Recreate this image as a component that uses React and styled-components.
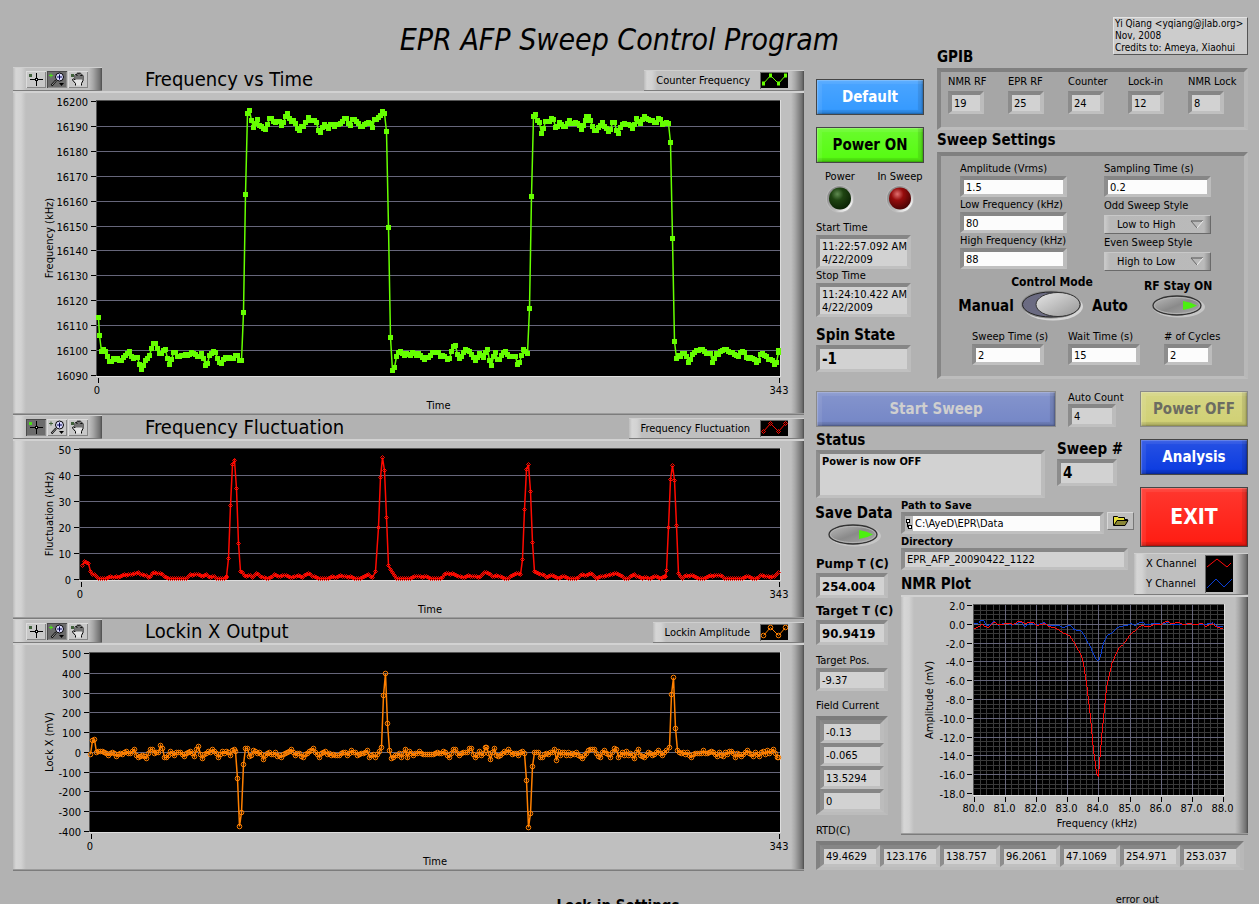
import React from "react";
import { useState } from "react";

import styled, { createGlobalStyle, css } from "styled-components";

/* traces are kept in thirds of a pixel: [first x, [y, y, ...]] with a step of 6 */
const counterTrace = [
  [298, [770]],
  [301, [826, 874, 866, 874, 889, 902, 904, 895, 898, 893, 901, 899, 890, 884, 878, 874, 887, 895, 892, 892, 913, 926, 916, 901, 893, 886, 865, 849, 848, 865, 880, 880, 871, 868]],
  [503, [895, 912, 898, 877, 875, 889, 889, 884, 886, 883, 884, 883, 877, 880, 881, 888, 889, 880, 895, 915, 910, 886, 878, 874, 877, 895, 907, 910, 898, 890, 893, 892, 893, 893, 885, 884, 901, 901, 757, 403, 160, 149, 181, 202, 188, 176, 196, 199, 205, 208, 193, 173, 173, 182, 187, 182, 184, 194, 185, 167, 160, 173, 182, 181, 190, 203, 211, 199, 199, 187]],
  [926, [172, 181, 179, 181, 187, 211, 217, 202, 193, 199, 205, 193, 193, 199, 191, 191, 189, 182, 173, 173, 190, 196, 178, 176, 184, 190, 197, 199, 193, 189, 187, 188, 202, 176, 176, 172, 164, 154, 160, 214, 502, 832, 931, 922, 889, 875, 872, 878, 886, 878, 881, 884, 876, 879, 884, 880]],
  [1262, [884, 890, 898, 892, 890, 885, 877, 876, 876, 876, 889, 886, 888]],
  [1343, [898, 893, 874, 859, 856, 883, 895, 889, 877, 868, 871, 874, 883, 892, 901, 892, 880, 886, 892, 877, 868, 901, 916, 889, 877, 898, 898, 886, 877, 874, 883, 889, 889, 889, 889, 913, 907, 886, 868, 874, 880, 745, 409, 169, 163, 181, 187, 220, 205, 184, 184, 182, 175, 178, 202, 199, 187, 191, 197, 199, 188, 181, 188, 188, 187, 190, 195, 206, 196, 181]],
  [1760, [169, 169, 181, 197, 211, 209, 202, 196, 187, 199, 205, 214, 208, 185, 185, 211, 220, 202, 193, 190, 193, 191, 196, 205, 193, 175, 182, 188, 178, 169, 173, 178, 181, 180, 187, 187, 173, 178, 193, 190, 187, 190, 247, 535, 844, 895, 886, 887, 880, 880, 889, 905, 898, 883, 877, 871, 870, 868, 868, 874, 878, 880, 880, 905, 895, 880, 883, 874, 870, 868, 868, 874, 877, 877, 881, 884, 889, 875, 874, 876, 892, 895, 892, 895, 898, 905, 901, 883, 878, 886, 889, 898, 898, 899, 913, 905, 877]],
  [2338, [871]],
];

const fluctuationTrace = [
  [248, [466, 454, 457, 460, 484, 491, 491, 498, 503, 504, 503, 504, 504, 501, 499, 500, 500, 499, 500, 498, 496, 493, 494, 493, 492, 492, 490, 488, 487, 492, 493, 494, 495, 502, 498, 488, 487, 490, 490, 490, 491, 499, 502, 503, 505, 505, 504, 505, 505, 505, 504, 505, 503, 498, 493, 495, 493, 493, 491, 495, 499, 494, 491, 497, 500, 498, 499, 503, 505, 504, 504, 503, 501]],
  [682, [498, 445, 286, 163, 151, 235, 400, 484, 487, 494, 497, 496, 496, 501, 494, 490, 491, 498, 502, 502, 503, 504, 502, 497, 492, 495, 499, 498, 495, 494, 495, 498, 501, 502, 499, 498, 496, 499, 502, 496, 491, 489, 492, 497, 499, 501, 503, 503, 504, 505, 504, 504, 502, 499, 501, 500, 498, 496, 498, 499, 499, 500, 498, 502, 504, 504, 503, 503, 500, 497, 495, 493, 499, 500]],
  [1127, [484]],
  [1136, [352, 202, 142, 181, 322, 466, 478, 487, 496, 503, 504, 503, 505, 504, 505, 504, 505, 502, 498, 499, 499, 498, 500, 499, 498, 500, 503, 504, 504, 503, 504, 503, 501, 493, 488, 490, 492, 490, 491, 495, 497, 499, 502, 500, 498, 496, 498, 499, 499, 499, 500, 499, 491, 487, 487, 488, 492, 498, 497, 495, 497, 499, 501, 503, 504, 503, 497, 496, 493, 490, 489]],
  [1562, [493, 448, 298, 178, 163, 244, 397, 484, 485, 488, 491, 491, 494, 501, 497, 496, 496, 498, 501, 503, 501, 499, 498, 500, 503, 504, 504, 504, 503, 501, 495, 491, 495, 496, 492, 490, 492, 498, 503, 500, 499, 498, 499, 495, 495, 493, 491, 490, 490, 492, 494, 498, 503, 504, 503, 499, 494, 493, 497, 499, 502, 504, 502, 500, 503, 504, 502, 499, 499, 500, 503, 501, 499]],
  [1997, [498]],
  [2002, [481, 352, 208, 166, 211, 346, 488, 499, 503, 497, 496, 497, 495, 494, 497, 502, 504, 504, 503, 504, 502, 499, 496, 497, 496, 496, 495, 494, 499, 503, 504, 504, 505, 504, 504, 505, 504, 504, 503, 500, 499, 499, 500, 503, 504, 503, 500, 496, 495, 497, 498, 499, 500, 498, 497, 493, 487]],
];

const lockinTrace = [
  [272, [401, 360, 356, 395, 394, 392, 392, 396, 399, 404, 400, 395, 400, 408, 402, 399, 401, 396, 394, 398, 399, 393, 387, 405, 411, 407, 406, 408, 414, 400, 387, 386, 398, 396, 397, 375, 383, 410, 411, 404, 394, 400, 404, 397, 396, 395, 401, 408, 400, 395, 393, 399, 408, 388, 378, 403, 414, 403, 398, 394, 396, 388, 393, 400, 410, 403, 394, 398, 394, 396, 404, 391, 387]],
  [708, [393, 473, 618, 576, 432, 384, 385, 408, 405, 390, 392, 400, 396, 401, 418, 405, 398, 397, 401, 403, 397, 408, 405, 411, 402, 398, 396, 394, 388, 396, 404, 399, 398, 408, 411, 402, 400, 394, 391, 385, 397, 402, 411, 400, 396, 392, 402, 400, 404, 402, 405, 404, 404, 400, 396, 397, 405, 399, 391, 396, 395, 404, 401, 400, 398, 396, 391, 411, 404, 402, 411, 402, 394, 380, 225, 158, 308, 390, 414, 410, 405, 406, 398, 411, 400, 388, 411, 393, 398, 404, 398, 400, 393, 400, 402, 402, 402, 402, 402, 402, 398, 396, 400, 398, 393, 396, 405, 412, 400, 388, 386, 399, 404, 398, 396, 397, 396, 384, 385, 403, 412, 404, 394, 405, 399, 381]],
  [1462, [380, 400, 418, 396, 384, 404, 407, 405, 398, 394, 396, 387, 396, 402, 400, 400, 405, 396, 393]],
  [1575, [398, 480, 621, 579, 437, 396, 396, 396, 410, 411, 403, 400, 402, 396, 397, 388, 420, 392, 404, 396, 395, 404, 396, 404, 399, 401, 396, 404, 408, 413, 405, 400, 390, 388, 387, 388, 400, 407, 410, 396, 391, 398, 402, 410, 396, 384, 387, 410, 403, 396, 404, 393, 406, 398, 404, 414, 397, 387, 404, 408, 411, 405, 396, 399, 404, 402, 395, 391, 398, 404, 396, 391]],
  [2009, [381, 223, 171, 324, 389, 396, 400, 395, 402, 396, 404, 411, 402, 399, 398, 398, 400, 390, 400, 399, 396, 394, 397, 402, 408, 397, 404, 408, 396, 402, 394, 392, 398, 411, 398, 402, 408, 401, 396, 390, 398, 402, 407, 395, 402, 408, 396, 394, 402, 390, 398, 392, 388, 400, 410]],
  [2337, [411]],
];

const xChannel = "253,265 262,263 277,253 283,259 295,262 303,255 313,246 325,255 337,254 346,251 358,251 371,253 383,245 395,245 405,251 415,248 428,247 440,256 455,254 463,250 475,258 486,262 498,265 510,273 522,280 538,286 550,303 562,325 574,346 580,370 589,425 598,500 604,560 610,625 616,672 620,700 625,711 629,665 635,590 642,520 650,440 658,405 666,370 676,347 686,325 700,313 712,297 722,281 738,270 748,261 758,255 765,261 780,259 795,253 813,253 825,246 834,243 843,251 855,249 863,246 875,252 888,254 898,249 915,255 935,250 948,260 957,255 968,251 980,261 1000,267";
const yChannel = "253,250 265,250 273,241 282,242 290,258 303,252 313,243 323,256 337,252 350,249 365,256 380,250 393,246 405,260 418,251 430,252 440,256 455,250 463,247 473,256 510,257 518,264 535,256 543,258 552,269 572,272 580,282 592,304 602,322 610,342 620,360 626,362 632,345 640,312 650,288 668,277 680,265 690,259 710,257 722,250 735,257 750,246 760,247 768,254 800,250 813,253 835,247 848,254 880,253 900,250 920,254 935,252 948,253 970,248 980,258 1000,261";

const range = (from, to, step) => {
  const out = [];
  const n = Math.round((to - from) / step);
  for (let i = 0; i <= n; i++) out.push(from + i * step);
  return out;
};

const tracePoints = (trace, dy) =>
  trace.flatMap(([x, ys]) =>
    ys.map((y, i) => [Math.round((x + i * 6) / 3) - 13.5, Math.round(y / 3) + dy + 0.5])
  );

const Marker = ({ kind, x, y }) => {
  if (kind === "square") {
    return <rect x={x - 2.5} y={y - 2.5} width="5" height="5" fill="#66ff00" />;
  }
  if (kind === "diamond") {
    return (
      <path d={`M${x - 2} ${y}l2 -2l2 2l-2 2z`} fill="none" stroke="#ff0a00" />
    );
  }
  return <circle cx={x} cy={y} r="2.3" fill="none" stroke="#ff8000" />;
};

const colors = { square: "#66ff00", diamond: "#ff0a00", circle: "#ff8000" };

function StripChart({ height, left, bottom, ticks, kind, trace, dy, axis }) {
  const points = tracePoints(trace, dy);
  const tickY = (i) =>
    Math.round(10 + (i * (bottom - 11)) / (ticks.length - 1)) + 0.5;
  const right = 767;
  return (
    <ChartSvg viewBox={`0 0 791 ${height}`} role="img" aria-label={axis}>
      <rect x={left - 1} y="9" width={right - left + 2} height={bottom - 8} fill="#dedede" />
      <rect x={left - 1} y="9" width={right - left + 1} height={bottom - 9} fill="#555" />
      <rect x={left} y="10" width={right - left} height={bottom - 10} fill="#000" />
      {ticks.map((t, i) => (
        <g key={t}>
          <text x={left - 9} y={tickY(i) + 4} textAnchor="end">
            {t}
          </text>
          <path d={`M${left - 6} ${tickY(i)}h5`} stroke="#000" />
          {i > 0 && i < ticks.length - 1 && (
            <path d={`M${left} ${tickY(i)}H${right}`} stroke="#66667a" />
          )}
        </g>
      ))}
      <polyline points={points.join(" ")} fill="none" stroke={colors[kind]} strokeWidth="1.5" />
      {points.map(([x, y], i) => (
        <Marker key={i} kind={kind} x={x} y={y} />
      ))}
      <path d={`M${left + 1.5} ${bottom + 2}v5M${right - 0.5} ${bottom + 2}v5`} stroke="#000" />
      <text x={left} y={bottom + 18} textAnchor="middle">
        0
      </text>
      <text x={right - 1} y={bottom + 18} textAnchor="middle">
        343
      </text>
      <text x={(left + right) / 2} y={bottom + 33} textAnchor="middle">
        Time
      </text>
      <text
        transform={`translate(40 ${(bottom + 9) / 2}) rotate(-90)`}
        textAnchor="middle"
      >
        {axis}
      </text>
    </ChartSvg>
  );
}

function NmrChart() {
  const gx = (v) => Math.round(73 + (v - 80) * 31.1) + 0.5;
  const gy = (v) => Math.round(10 + (2 - v) * 9.4) + 0.5;
  return (
    <ChartSvg viewBox="0 0 347 240" role="img" aria-label="NMR Plot">
      <rect x="72" y="9" width="252" height="192" fill="#dedede" />
      <rect x="72" y="9" width="251" height="191" fill="#555" />
      <rect x="73" y="10" width="250" height="190" fill="#000" />
      {range(80.2, 87.8, 0.2).map((v) => (
        <path key={v} d={`M${gx(v)} 10V200`} stroke="#3a3a3a" />
      ))}
      {range(-17.5, 1.5, 0.5).map((v) => (
        <path key={v} d={`M73 ${gy(v)}H323`} stroke="#3a3a3a" />
      ))}
      {range(80, 88, 1).map((v) => (
        <g key={v}>
          {v > 80 && v < 88 && <path d={`M${gx(v)} 10V200`} stroke="#66667a" />}
          <path d={`M${gx(v)} 202v5`} stroke="#000" />
          <text x={gx(v) - 1} y="217" textAnchor="middle">
            {v.toFixed(1)}
          </text>
        </g>
      ))}
      {range(-18, 2, 2).map((v) => (
        <g key={v}>
          {v > -18 && v < 2 && <path d={`M73 ${gy(v)}H323`} stroke="#66667a" />}
          <path d={`M66 ${gy(v)}h5`} stroke="#000" />
          <text x="64" y={gy(v) + 4} textAnchor="end">
            {v.toFixed(1)}
          </text>
        </g>
      ))}
      <g transform="translate(-11 -55) scale(0.33333)" fill="none" strokeWidth="3" shapeRendering="crispEdges">
        <polyline points={yChannel} stroke="#0a3fd6" />
        <polyline points={xChannel} stroke="#ff0a0a" />
      </g>
      <text x="196" y="232" textAnchor="middle">
        Frequency (kHz)
      </text>
      <text transform="translate(32 105) rotate(-90)" textAnchor="middle">
        Amplitude (mV)
      </text>
    </ChartSvg>
  );
}

function Tools({ active }) {
  const dot = (i) => (active === i ? "#4be01a" : "#3f5f3a");
  return (
    <Palette>
      <ToolButton $on={active === 0} aria-label="Cursor">
        <svg width="20" height="17">
          <rect x="3" y="3" width="3" height="3" fill={dot(0)} />
          <path d="M10.500 2v5M10.500 10v5M4 8.500h5M12 8.500h5" stroke="#000" />
          <rect x="9.500" y="7.500" width="2" height="2" fill="#eee" stroke="#000" />
        </svg>
      </ToolButton>
      <ToolButton $on={active === 1} aria-label="Zoom">
        <svg width="20" height="17">
          <path d="M2 4.500h4M4 2.500v4" stroke={dot(1)} />
          <path d="M9 9.500l-4.500 5" stroke="#000" strokeWidth="2" />
          <path d="M8.800 9.700l-3.800 4.300" stroke="#ddd" strokeWidth="0.700" />
          <circle cx="12.500" cy="6" r="4" fill="#dcdcff" stroke="#000" />
          <path d="M10 6h5M12.500 3.500v5" stroke="#00004a" />
          <path d="M12 12h5l-2.500 3z" />
        </svg>
      </ToolButton>
      <ToolButton $on={active === 2} aria-label="Pan">
        <svg width="20" height="17">
          <rect x="3" y="3" width="3" height="3" fill={dot(2)} />
          <path
            d="M7.500 14.500v-2l-3-3.500c0-1.500 1.500-1.500 2.500 0V4.500c0-1.500 2-1.500 2 0V3c0-1.500 2-1.500 2 0c0-1.500 2-1.500 2 .5v1.500c0-1.500 2-1.500 2 0V9.500l-1.500 3v2"
            fill="#e4e4e4"
            stroke="#000"
          />
          <path d="M9 4V8.500M11 3V8.500M13 4V8.500" stroke="#000" />
        </svg>
      </ToolButton>
    </Palette>
  );
}

const LegendIcon = ({ kind }) => (
  <svg width="28" height="17">
    <path d="M0 17V0H28" fill="none" stroke="#666" strokeWidth="2" />
    <rect x="1" y="1" width="27" height="15" fill="#000" />
    <path d="M3.500 11.500L10.500 3.500L18.500 11.500L25.500 3.500" fill="none" stroke={colors[kind]} />
    {[[3.5, 11.5], [10.5, 3.5], [18.5, 11.5], [25.5, 3.5]].map(([x, y]) => (
      <g key={x}>
        {kind === "square" ? (
          <rect x={x - 1.5} y={y - 2} width="3" height="4" fill={colors[kind]} />
        ) : (
          <Marker kind={kind} x={x} y={y} />
        )}
      </g>
    ))}
  </svg>
);

function Plot({ title, legend, active, ...chart }) {
  return (
    <PlotBlock>
      <PlotHead>
        <Tools active={active} />
        <PlotTitle>{title}</PlotTitle>
        <Legend>
          {legend}
          <LegendIcon kind={chart.kind} />
        </Legend>
      </PlotHead>
      <Frame>
        <StripChart {...chart} />
      </Frame>
    </PlotBlock>
  );
}

function Lamp({ label, hue }) {
  const [light, base, dark] = hue;
  return (
    <LampItem>
      {label}
      <svg width="30" height="30">
        <defs>
          <radialGradient id={`lamp-${label.length}`} cx="38%" cy="30%" r="70%">
            <stop offset="0" stopColor={light} />
            <stop offset="0.4" stopColor={base} />
            <stop offset="1" stopColor={dark} />
          </radialGradient>
          <linearGradient id={`ring-${label.length}`} x1="0" y1="0" x2="1" y2="1">
            <stop offset="0.2" stopColor="#8e8e8e" />
            <stop offset="0.6" stopColor="#b8b8b8" />
            <stop offset="0.85" stopColor="#f6f6f6" />
          </linearGradient>
        </defs>
        <circle cx="15" cy="15" r="14" fill="#bcbcbc" />
        <circle cx="15" cy="15" r="13" fill={`url(#ring-${label.length})`} />
        <circle cx="15" cy="14.500" r="11" fill={`url(#lamp-${label.length})`} />
      </svg>
    </LampItem>
  );
}

function LedToggle({ label }) {
  const [on, setOn] = useState(true);
  return (
    <BareButton aria-label={label} aria-pressed={on} onClick={() => setOn(!on)}>
      <svg width="54" height="24">
        <defs>
          <linearGradient id="pill" x1="0" y1="0" x2="1" y2="1">
            <stop offset="0.200" stopColor="#a8a8a8" />
            <stop offset="0.500" stopColor="#8a8a8a" />
            <stop offset="0.900" stopColor="#a4a4a4" />
          </linearGradient>
        </defs>
        <ellipse cx="28" cy="13" rx="26" ry="10.500" fill="#c6c6c6" />
        <ellipse cx="26" cy="11.500" rx="24" ry="9.500" fill="url(#pill)" stroke="#333" strokeWidth="1.300" />
        <ellipse cx="26" cy="11.500" rx="22.500" ry="8" fill="none" stroke="#b4b4b4" />
        <path d="M32 7q8 1 14 4.500q-6 3.500-14 4.500z" fill={on ? "#4cf010" : "#5a7a50"} />
      </svg>
    </BareButton>
  );
}

function ModeSwitch() {
  const [auto, setAuto] = useState(true);
  return (
    <BareButton aria-label="Control Mode" aria-pressed={auto} onClick={() => setAuto(!auto)}>
      <svg width="62" height="31">
        <defs>
          <linearGradient id="knob" x1="0" y1="0" x2="1" y2="1">
            <stop offset="0.150" stopColor="#dadada" />
            <stop offset="0.850" stopColor="#a2a2a2" />
          </linearGradient>
        </defs>
        <ellipse cx="32" cy="16.500" rx="30" ry="14" fill="#d6d6d6" />
        <ellipse cx="30" cy="14.500" rx="30" ry="14" fill="#8e8e8e" />
        <ellipse cx="30" cy="14.500" rx="28.500" ry="12.500" fill="#6b6b82" stroke="#222" />
        <ellipse cx={auto ? 37 : 23} cy="14.500" rx="22" ry="12" fill="url(#knob)" stroke="#333" />
      </svg>
    </BareButton>
  );
}

const TextField = ({ id, label, value, width }) => (
  <Field>
    <Label htmlFor={id}>{label}</Label>
    <Input id={id} defaultValue={value} $width={width} />
  </Field>
);

const SelectField = ({ id, label, value }) => (
  <Field $gap={2}>
    <Label htmlFor={id}>{label}</Label>
    <SelectWrap>
      <Select id={id} defaultValue={value}>
        <option>Low to High</option>
        <option>High to Low</option>
      </Select>
      <svg width="14" height="9">
        <path d="M1 1h12" stroke="#555" />
        <path d="M1 1l6 7" stroke="#666" />
        <path d="M13 1l-6 7" stroke="#eee" />
      </svg>
    </SelectWrap>
  </Field>
);

const gpib = [
  ["NMR RF", 19],
  ["EPR RF", 25],
  ["Counter", 24],
  ["Lock-in", 12],
  ["NMR Lock", 8],
];
const fieldCurrent = ["-0.13", "-0.065", "13.5294", "0"];
const rtd = ["49.4629", "123.176", "138.757", "96.2061", "47.1069", "254.971", "253.037"];

export default function App() {
  return (
    <Page>
      <GlobalStyle />
      <Title>EPR AFP Sweep Control Program</Title>

      <Plots>
        <Plot
          title="Frequency vs Time"
          legend="Counter Frequency"
          active={1}
          height={324}
          left={84}
          bottom={285}
          ticks={range(0, 11, 1).map((i) => 16200 - i * 10)}
          kind="square"
          trace={counterTrace}
          dy={-31}
          axis="Frequency (kHz)"
        />
        <Plot
          title="Frequency Fluctuation"
          legend="Frequency Fluctuation"
          active={0}
          height={180}
          left={67}
          bottom={141}
          ticks={[50, 40, 30, 20, 10, 0]}
          kind="diamond"
          trace={fluctuationTrace}
          dy={-29}
          axis="Fluctuation (kHz)"
        />
        <Plot
          title="Lockin X Output"
          legend="Lockin Amplitude"
          active={1}
          height={228}
          left={77}
          bottom={189}
          ticks={[500, 400, 300, 200, 100, 0, -100, -200, -300, -400]}
          kind="circle"
          trace={lockinTrace}
          dy={-23}
          axis="Lock X (mV)"
        />
      </Plots>

      <Quick>
        <BevelButton $color="#3399ff">Default</BevelButton>
        <BevelButton $color="#55fb10" $ink="#000">
          Power ON
        </BevelButton>
        <Lamps>
          <Lamp label="Power" hue={["#5f8a50", "#1f4412", "#0c2405"]} />
          <Lamp label="In Sweep" hue={["#e07070", "#960c0c", "#4c0404"]} />
        </Lamps>
        <Field>
          <Label htmlFor="start">Start Time</Label>
          <Sunken as="output" id="start" $width={95} $height={34} $top>
            11:22:57.092 AM
            <br />
            4/22/2009
          </Sunken>
        </Field>
        <Field>
          <Label htmlFor="stop">Stop Time</Label>
          <Sunken as="output" id="stop" $width={95} $height={34} $top>
            11:24:10.422 AM
            <br />
            4/22/2009
          </Sunken>
        </Field>
        <SpinState>
          <Heading as="label" htmlFor="spin">
            Spin State
          </Heading>
          <Sunken as="output" id="spin" $width={95} $height={27} $size={15} $bold>
            -1
          </Sunken>
        </SpinState>
      </Quick>

      <Aside>
        <AsideHead>
          <Heading>GPIB</Heading>
          <Note>
            Yi Qiang &lt;yqiang@jlab.org&gt;
            <br />
            Nov, 2008
            <br />
            Credits to: Ameya, Xiaohui
          </Note>
        </AsideHead>
        <GpibPanel>
          {gpib.map(([label, value]) => (
            <Field key={label} $gap={2}>
              <Label htmlFor={label}>{label}</Label>
              <Sunken as="output" id={label} $width={36} $height={23}>
                {value}
              </Sunken>
            </Field>
          ))}
        </GpibPanel>
        <Heading>Sweep Settings</Heading>
        <SettingsPanel>
          <SettingsColumns>
            <Stack $gap={1}>
              <TextField id="amplitude" label="Amplitude (Vrms)" value="1.5" />
              <TextField id="low" label="Low Frequency (kHz)" value="80" />
              <TextField id="high" label="High Frequency (kHz)" value="88" />
            </Stack>
            <Stack $gap={2}>
              <TextField id="sampling" label="Sampling Time (s)" value="0.2" />
              <SelectField id="odd" label="Odd Sweep Style" value="Low to High" />
              <SelectField id="even" label="Even Sweep Style" value="High to Low" />
            </Stack>
          </SettingsColumns>
          <Modes>
            <ModeGrid>
              <ModeLabel $wide>Control Mode</ModeLabel>
              <Heading as="span">Manual</Heading>
              <ModeSwitch />
              <Heading as="span">Auto</Heading>
            </ModeGrid>
            <RfStay>
              <ModeLabel>RF Stay ON</ModeLabel>
              <LedToggle label="RF Stay ON" />
            </RfStay>
          </Modes>
          <Timing>
            <TextField id="sweepTime" label="Sweep Time (s)" value="2" width={72} />
            <TextField id="waitTime" label="Wait Time (s)" value="15" width={72} />
            <TextField id="cycles" label="# of Cycles" value="2" width={48} />
          </Timing>
        </SettingsPanel>
      </Aside>

      <Lower>
        <Console>
          <Row $gap={12}>
            <BevelButton $color="#7486c6" $ink="#cfcfcf" $wide disabled>
              Start Sweep
            </BevelButton>
            <AutoCount>
              <Label htmlFor="autoCount">Auto Count</Label>
              <Sunken as="output" id="autoCount" $width={48} $height={23}>
                4
              </Sunken>
            </AutoCount>
          </Row>
          <Row $gap={12}>
            <Status>
              <Heading as="label" htmlFor="status">
                Status
              </Heading>
              <Sunken as="output" id="status" $height={48} $top $bold>
                Power is now OFF
              </Sunken>
            </Status>
            <Field>
              <Heading as="label" htmlFor="sweepNo">
                Sweep #
              </Heading>
              <Sunken as="output" id="sweepNo" $width={60} $height={27} $size={15} $bold>
                4
              </Sunken>
            </Field>
          </Row>
        </Console>

        <Side>
          <BevelButton $color="#d0d074" $ink="#6c6c62" disabled>
            Power OFF
          </BevelButton>
          <BevelButton $color="#0a3ae0">Analysis</BevelButton>
          <BevelButton $color="#ff1c12" $tall>
            EXIT
          </BevelButton>
          <NmrLegend>
            <LegendNames>
              <span>X Channel</span>
              <span>Y Channel</span>
            </LegendNames>
            <svg width="28" height="38">
              <path d="M0 38V0H28" fill="none" stroke="#666" strokeWidth="2" />
              <rect x="1" y="1" width="27" height="36" fill="#000" />
              <path d="M2 12l10-8l10 8l4-4" fill="none" stroke="#ff0a0a" />
              <path d="M2 33l9-9l8 8l8-8" fill="none" stroke="#0a3fd6" />
            </svg>
          </NmrLegend>
        </Side>

        <Temps>
          <SaveData>
            <Heading>Save Data</Heading>
            <LedToggle label="Save Data" />
          </SaveData>
          <Field $gap={1}>
            <Label htmlFor="pump" $strong>
              Pump T (C)
            </Label>
            <Sunken as="output" id="pump" $width={72} $height={25} $size={13} $bold>
              254.004
            </Sunken>
          </Field>
          <TargetTemp>
            <Label htmlFor="target" $strong>
              Target T (C)
            </Label>
            <Sunken as="output" id="target" $width={72} $height={25} $size={13} $bold>
              90.9419
            </Sunken>
          </TargetTemp>
          <Field>
            <Label htmlFor="pos">Target Pos.</Label>
            <Sunken as="output" id="pos" $width={72} $height={23}>
              -9.37
            </Sunken>
          </Field>
          <FieldCurrent>
            <Label as="span">Field Current</Label>
            <ArrayBox $column>
              {fieldCurrent.map((v) => (
                <Sunken key={v} $height={23}>
                  {v}
                </Sunken>
              ))}
            </ArrayBox>
          </FieldCurrent>
          <Label as="span">RTD(C)</Label>
        </Temps>

        <Paths>
          <PathLabel htmlFor="path">Path to Save</PathLabel>
          <PathRow>
            <PathBox>
              <svg width="8" height="14">
                <rect x="1.500" y="2.500" width="3" height="3" fill="#fff" stroke="#000" />
                <rect x="3.500" y="8.500" width="3" height="3" fill="#fff" stroke="#000" />
                <path d="M2.500 6v4h1" fill="none" stroke="#000" />
              </svg>
              <PathInput id="path" defaultValue="C:\AyeD\EPR\Data" />
            </PathBox>
            <FolderButton aria-label="Browse">
              <svg width="17" height="12">
                <path d="M1.500 10.500v-9h4l1 1h6v2h3l-3 6z" fill="#e8df3a" stroke="#000" />
                <path d="M2 10.500l3-5h11l-3 5z" fill="#8a8636" stroke="#000" />
              </svg>
            </FolderButton>
          </PathRow>
          <PathLabel htmlFor="directory">Directory</PathLabel>
          <Sunken as="output" id="directory" $height={22}>
            EPR_AFP_20090422_1122
          </Sunken>
          <NmrHeading>NMR Plot</NmrHeading>
        </Paths>

        <Nmr>
          <Frame>
            <NmrChart />
          </Frame>
        </Nmr>

        <Rtd>
          <ArrayBox>
            {rtd.map((v) => (
              <Sunken key={v} $height={22}>
                {v}
              </Sunken>
            ))}
          </ArrayBox>
        </Rtd>
      </Lower>

      <Footer>
        <Heading>Lock-in Settings</Heading>
        <span>error out</span>
      </Footer>
    </Page>
  );
}

const GlobalStyle = createGlobalStyle`
  * {
    box-sizing: border-box;
  }
  body {
    margin: 0;
    background: #b2b2b2;
    color: #000;
    font: 11px/14px "DejaVu Sans Condensed", "DejaVu Sans", sans-serif;
  }
  svg {
    display: block;
  }
`;

const Page = styled.main`
  display: grid;
  grid-template-columns: minmax(0, 1fr) 109px 311px;
  grid-template-rows: 50px auto auto 1fr;
  grid-template-areas:
    "title title aside"
    "plots quick aside"
    "plots lower lower"
    "footer footer footer";
  column-gap: 12px;
  height: 100vh;
  min-width: 1100px;
  padding: 17px 11px 0 13px;
  overflow: hidden;
`;

const Title = styled.h1`
  grid-area: title;
  margin: 0;
  padding-right: 86px;
  text-align: right;
  font-size: 30px;
  font-style: italic;
  font-weight: 400;
  line-height: 46px;
`;

const Plots = styled.section`
  grid-area: plots;
`;

const PlotBlock = styled.article`
  display: flex;
  flex-direction: column;
`;

const PlotHead = styled.header`
  display: flex;
  align-items: flex-end;
  height: 24px;
`;

const PlotTitle = styled.h2`
  margin: 0 auto 0 43px;
  font-size: 20px;
  font-weight: 400;
  line-height: 24px;
`;

const raised = css`
  background: linear-gradient(
    90deg,
    #bcbcbc 0,
    #d6d6d6 3px,
    #d2d2d2 8px,
    #bfbfbf 13px,
    #bfbfbf calc(100% - 13px),
    #a8a8a8 calc(100% - 9px),
    #707070 calc(100% - 2px),
    #4c4c4c 100%
  );
`;

const Palette = styled.div`
  ${raised}
  display: flex;
  align-items: center;
  gap: 1px;
  width: 89px;
  height: 24px;
  padding-left: 13px;
  border-top: 1px solid #cfcfcf;
  border-bottom: 1px solid #7c7c7c;
`;

const ToolButton = styled.button`
  width: 20px;
  height: 17px;
  padding: 0;
  border: 0;
  background: ${({ $on }) => ($on ? "#6c6c6c" : "#c8c8c8")};
  box-shadow: inset 1px 1px ${({ $on }) => ($on ? "#4a4a4a" : "#dcdcdc")},
    inset -1px -1px ${({ $on }) => ($on ? "#8c8c8c" : "#868686")};
`;

const Legend = styled.div`
  ${raised}
  display: flex;
  align-items: center;
  gap: 10px;
  height: 21px;
  padding: 0 16px 0 12px;
  border-top: 1px solid #cfcfcf;
  border-bottom: 1px solid #7c7c7c;
`;

const Frame = styled.div`
  ${raised}
  box-shadow: inset 0 2px #d2d2d2, inset 0 -1px #7c7c7c, inset 0 -2px #9c9c9c;
`;

const ChartSvg = styled.svg`
  width: 100%;
  height: auto;
`;

const Quick = styled.section`
  grid-area: quick;
  display: flex;
  flex-direction: column;
  padding-top: 12px;
`;

const BevelButton = styled.button`
  width: ${({ $wide }) => ($wide ? "240px" : "108px")};
  height: ${({ $tall }) => ($tall ? "60px" : "36px")};
  flex: none;
  margin-bottom: ${({ $tall }) => ($tall ? "6px" : "12px")};
  padding: 0;
  border: 1px solid ${({ disabled }) => (disabled ? "#8a8a8a" : "#454545")};
  background: linear-gradient(rgba(255, 255, 255, 0.12), rgba(255, 255, 255, 0)),
    ${({ $color }) => $color};
  box-shadow: inset 1px 1px 1px rgba(255, 255, 255, 0.25),
    inset 5px 4px 1px rgba(255, 255, 255, 0.08),
    inset -1px -1px 2px rgba(0, 0, 0, 0.3),
    inset -5px -4px 1px rgba(0, 0, 0, 0.1);
  color: ${({ $ink }) => $ink || "#fff"};
  font: bold ${({ $tall }) => ($tall ? "21px" : "15px")} "DejaVu Sans Condensed",
    "DejaVu Sans", sans-serif;
`;

const BareButton = styled.button`
  padding: 0;
  border: 0;
  background: none;
`;

const Lamps = styled.div`
  display: flex;
  gap: 12px;
  margin: -5px 0 7px;
`;

const LampItem = styled.div`
  display: flex;
  flex-direction: column;
  align-items: center;
  width: 48px;
  white-space: nowrap;
`;

const Field = styled.div`
  display: flex;
  flex-direction: column;
  align-items: flex-start;
  gap: ${({ $gap }) => $gap || 0}px;
`;

const Label = styled.label`
  white-space: nowrap;
  ${({ $strong }) =>
    $strong &&
    css`
      font-size: 13px;
      font-weight: bold;
      line-height: 16px;
    `}
`;

const Heading = styled.h3`
  margin: 0;
  font-size: 15px;
  font-weight: bold;
  line-height: 20px;
  white-space: nowrap;
`;

const sunkenEdge = css`
  border: 4px solid;
  border-color: #868686 #bcbcbc #c0c0c0 #8c8c8c;
  border-bottom-width: 3px;
`;

const Sunken = styled.div`
  ${sunkenEdge}
  display: ${({ $top }) => ($top ? "block" : "flex")};
  align-items: center;
  width: ${({ $width }) => ($width ? `${$width}px` : "100%")};
  height: ${({ $height }) => $height}px;
  padding: ${({ $top }) => ($top ? "1px" : "0")} 0 0 2px;
  background: #d2d2d2;
  font-size: ${({ $size }) => $size || 11}px;
  font-weight: ${({ $bold }) => ($bold ? "bold" : "normal")};
  line-height: 13px;
  white-space: nowrap;
`;

const Input = styled.input`
  ${sunkenEdge}
  width: ${({ $width }) => $width || 107}px;
  height: 21px;
  padding: 0 2px;
  background: #fcfcfc;
  color: #000;
  font: inherit;
  line-height: 14px;
`;

const SpinState = styled.div`
  display: flex;
  flex-direction: column;
  margin-top: 8px;
`;

const Aside = styled.aside`
  grid-area: aside;
  display: flex;
  flex-direction: column;
`;

const AsideHead = styled.div`
  display: flex;
  align-items: flex-end;
  justify-content: space-between;
  height: 50px;
`;

const Note = styled.p`
  align-self: flex-start;
  width: 135px;
  margin: 0;
  padding: 0 1px;
  border: 1px solid;
  border-color: #e2e2e2 #555 #555 #e2e2e2;
  background: #cccccc;
  font-size: 10px;
  line-height: 12px;
  white-space: nowrap;
`;

const Panel = styled.div`
  ${sunkenEdge}
  border-color: #808080 #b8b8b8 #bcbcbc #858585;
  background: #a6a6a6;
`;

const GpibPanel = styled(Panel)`
  display: grid;
  grid-template-columns: repeat(4, 60px) 1fr;
  margin-top: 1px;
  padding: 3px 0 13px 7px;
`;

const SettingsPanel = styled(Panel)`
  margin-top: 2px;
  padding: 6px 0 10px 19px;
`;

const SettingsColumns = styled.div`
  display: flex;
  gap: 37px;
`;

const Stack = styled.div`
  display: flex;
  flex-direction: column;
  gap: ${({ $gap }) => $gap}px;
`;

const SelectWrap = styled.div`
  display: grid;
  align-items: center;
  width: 107px;

  select,
  svg {
    grid-area: 1 / 1;
  }
  svg {
    justify-self: end;
    margin-right: 7px;
    pointer-events: none;
  }
`;

const Select = styled.select`
  appearance: none;
  width: 107px;
  height: 19px;
  padding: 0 0 0 12px;
  border: 1px solid;
  border-color: #c8c8c8 #6a6a6a #6a6a6a #c8c8c8;
  border-radius: 0;
  background: linear-gradient(90deg, #cacaca 0, #b8b8b8 5px, #bababa calc(100% - 6px), #8c8c8c 100%);
  color: #000;
  font: inherit;
`;

const Modes = styled.div`
  display: flex;
  gap: 16px;
  height: 56px;
  margin-top: 3px;
`;

const ModeGrid = styled.div`
  display: grid;
  grid-template-columns: 52px 62px 36px;
  grid-template-rows: 16px 31px;
  column-gap: 9px;
  align-items: center;
  justify-items: center;
`;

const ModeLabel = styled.span`
  grid-column: ${({ $wide }) => ($wide ? "1 / -1" : "auto")};
  padding-left: ${({ $wide }) => ($wide ? "16px" : "0")};
  font-size: 12px;
  font-weight: bold;
  line-height: 16px;
  white-space: nowrap;
`;

const RfStay = styled.div`
  display: flex;
  flex-direction: column;
  align-items: center;
  padding-top: 4px;
`;

const Timing = styled.div`
  display: grid;
  grid-template-columns: 72px 72px 48px;
  gap: 24px;
  padding: 0 0 1px 12px;
`;

const Lower = styled.section`
  grid-area: lower;
  display: grid;
  grid-template-columns: 85px minmax(0, 1fr) 108px;
  grid-template-rows: 108px 96px 246px 30px;
  grid-template-areas:
    "console console side"
    "temps paths side"
    "temps nmr nmr"
    "rtd rtd rtd";
  margin-top: 12px;
`;

const Console = styled.div`
  grid-area: console;
  padding-right: 12px;
`;

const Row = styled.div`
  display: flex;
  align-items: flex-start;
  gap: ${({ $gap }) => $gap}px;
`;

const AutoCount = styled(Field)`
  line-height: 13px;
`;

const Status = styled(Field)`
  width: 229px;
  margin-top: -9px;
`;

const Side = styled.div`
  grid-area: side;
  display: flex;
  flex-direction: column;
`;

const NmrLegend = styled.div`
  ${raised}
  display: flex;
  align-self: flex-end;
  align-items: center;
  gap: 8px;
  width: 114px;
  height: 42px;
  padding-left: 12px;
  border-top: 1px solid #cfcfcf;
  border-bottom: 1px solid #7c7c7c;
  white-space: nowrap;
`;

const LegendNames = styled.div`
  display: flex;
  flex-direction: column;
  line-height: 20px;
`;

const Temps = styled.div`
  grid-area: temps;
  padding-top: 4px;
`;

const SaveData = styled.div`
  display: flex;
  flex-direction: column;
  align-items: center;
  width: 76px;
  height: 53px;
`;

const TargetTemp = styled(Field)`
  gap: 1px;
  margin: 5px 0 9px;
`;

const FieldCurrent = styled.div`
  display: flex;
  flex-direction: column;
  gap: 3px;
  width: 72px;
  margin: 8px 0 9px;
`;

const ArrayBox = styled.div`
  ${sunkenEdge}
  border-color: #7c7c7c #b8b8b8 #bcbcbc #828282;
  display: flex;
  flex-direction: ${({ $column }) => ($column ? "column" : "row")};
  background: #b2b2b2;
`;

const Paths = styled.div`
  grid-area: paths;
  padding-right: 12px;
`;

const PathLabel = styled.label`
  display: block;
  font-weight: bold;
  line-height: 13px;
`;

const PathRow = styled(Row)`
  gap: 3px;
  margin-right: -6px;
`;

const PathBox = styled.div`
  ${sunkenEdge}
  display: flex;
  flex: 1;
  align-items: center;
  height: 22px;
  margin-bottom: 1px;
  background: #b8b8b8;
`;

const PathInput = styled.input`
  flex: 1;
  min-width: 0;
  height: 15px;
  padding: 0 2px;
  border: 0;
  background: #fcfcfc;
  font: inherit;
`;

const FolderButton = styled.button`
  display: flex;
  align-items: center;
  justify-content: center;
  width: 27px;
  height: 18px;
  padding: 0;
  border: 1px solid;
  border-color: #d8d8d8 #777 #777 #d8d8d8;
  background: #bebebe;
`;

const NmrHeading = styled(Heading)`
  margin-top: 4px;
`;

const Nmr = styled.div`
  grid-area: nmr;
`;

const Rtd = styled.div`
  grid-area: rtd;
  padding-right: 4px;
`;

const Footer = styled.footer`
  grid-area: footer;
  display: flex;
  align-items: flex-start;
  justify-content: space-between;
  padding: 18px 89px 0 44%;

  h3 {
    padding-top: 3px;
  }
`;
